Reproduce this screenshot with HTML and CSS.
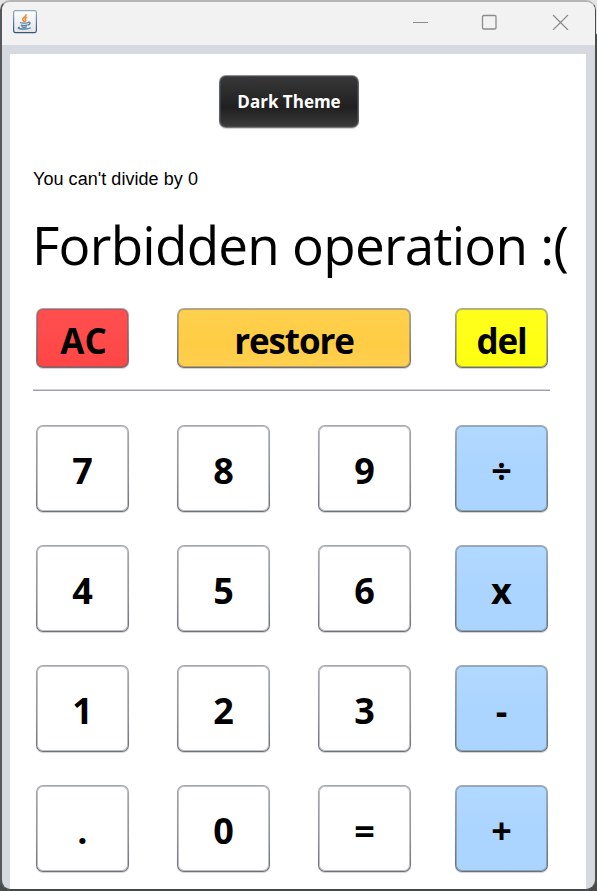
FILE: index.html
```
<!DOCTYPE html>
<html lang="en">
<head>
<meta charset="utf-8">
<title>Calculator</title>
<link rel="stylesheet" href="styles.css">
</head>
<body>
<div class="window">
  <header class="titlebar">
    <svg class="java" width="24" height="24" viewBox="0 0 24 24" fill="none">
      <defs><linearGradient id="b" x1="0" y1="0" x2="0" y2="1"><stop offset="0" stop-color="#8fa9bf"/><stop offset="1" stop-color="#305777"/></linearGradient><linearGradient id="f" x1="0" y1="0" x2="0" y2="1"><stop stop-color="#fff"/><stop offset="1" stop-color="#e2e4e6"/></linearGradient></defs>
      <rect x=".6" y=".6" width="22.8" height="22" rx="1.8" fill="url(#f)" stroke="url(#b)" stroke-width="1.2"/>
      <path d="M13.2 4.2c.3 2.500-4 3.300-3.600 5.400.2 1 1.600 1.400 1.900 2.300M14.200 7.300c-2.500 1-2.600 1.900-1.700 2.700.5.6.2 1.200-.3 1.600" stroke="#f0892f" stroke-width="1.500"/>
      <path d="M7 12.500c1.600.9 7 .8 8.500 0M7.800 14.800c1.500.7 5 .7 6.700 0M8.500 16.700c1.300.6 4 .6 5.300 0M15.300 12.200c2.400-.6 2.300 2.100-.4 3M6.800 17.200c-4.100 1 .6 1.900 4.700 1.800 3.500-.1 5.600-.7 6-1.500" stroke="#55809f" stroke-width="1.300"/>
    </svg>
    <svg class="controls" width="156" height="16" viewBox="0 0 156 16" fill="none" stroke="#8b8b8b">
      <path d="M0 8.500h15"/>
      <rect x="69.500" y="1.500" width="13.500" height="13.500" rx="1.200" stroke-width="1.300"/>
      <path d="M140 1l15 15M155 1l-15 15" stroke-width="1.200"/>
    </svg>
  </header>
  <main class="panel">
    <button class="btn theme">Dark Theme</button>
    <p class="message">You can't divide by 0</p>
    <p class="display">Forbidden operation :(</p>
    <section class="keys actions">
      <button class="btn red">AC</button>
      <button class="btn amber wide">restore</button>
      <button class="btn yellow">del</button>
    </section>
    <hr>
    <section class="keys digits">
      <button class="btn">7</button><button class="btn">8</button><button class="btn">9</button><button class="btn blue">÷</button>
      <button class="btn">4</button><button class="btn">5</button><button class="btn">6</button><button class="btn blue">x</button>
      <button class="btn">1</button><button class="btn">2</button><button class="btn">3</button><button class="btn blue">-</button>
      <button class="btn">.</button><button class="btn">0</button><button class="btn">=</button><button class="btn blue">+</button>
    </section>
  </main>
</div>
</body>
</html>
```
FILE: styles.css
```
* { box-sizing: border-box; }
body {
  margin: 0;
  width: 597px;
  height: 891px;
  overflow: hidden;
  padding: 0 1px 1px 0;
  background: linear-gradient(#e4e4e4 0 34px, #484a4c 34px);
}
.window {
  height: 890px;
  border: 2px solid #b5b5b5;
  border-width: 2px 1px 1px 2px;
  border-color: #b5b5b5 #4b4e50 #444 #55575a;
  border-radius: 10px;
  overflow: hidden;
  background: #d6d9e0;
  font-family: "Open Sans", "Noto Sans", sans-serif;
  color: #000;
}
.titlebar {
  height: 43px;
  background: #f2f2f2;
  display: flex;
  justify-content: space-between;
  align-items: flex-start;
  padding: 8px 26px 0 11px;
}
.controls { margin-top: 4px; }
.panel {
  margin: 9px 9px 0 8px;
  height: 835px;
  background: #fff;
  display: flex;
  flex-direction: column;
  align-items: flex-start;
  padding: 21px 0 0 23px;
}
.btn {
  border: 1px solid transparent;
  border-radius: 7px;
  padding: 5px 0 0;
  background: linear-gradient(#fff, #fff) padding-box, linear-gradient(#a6aaae, #8e9196 60%, #6c6f75) border-box;
  box-shadow: inset 0 0 0 1px rgba(90, 95, 102, .4), 0 1px 1px #d0d1d4;
  font: 700 36px/1 "Open Sans", "Noto Sans", sans-serif;
  color: #000;
}
.theme {
  width: 140px;
  height: 53px;
  margin-left: 186px;
  padding: 0;
  background: linear-gradient(#383838, #202020 62%, #3b3b3b) padding-box, linear-gradient(#8b9092, #606466 20%, #5c5f61 85%, #777) border-box;
  color: #fff;
  font-size: 17px;
}
.message {
  margin: 41px 0 0;
  font: 18px/20px "Liberation Sans", Arial, sans-serif;
  letter-spacing: 0.05px;
}
.display {
  margin: 16px 0 0 -1px;
  font-size: 53px;
  line-height: 80px;
  height: 80px;
  white-space: nowrap;
  letter-spacing: -0.75px;
}
.keys {
  display: grid;
  grid-template-columns: 93px 93px 93px 93px;
  column-gap: 48px;
  margin-left: 3px;
}
.keys .btn:last-child, .keys .blue { margin-left: -4px; margin-right: 4px; }
.actions { margin-top: 23px; grid-auto-rows: 60px; }
.actions .btn { font-size: 35px; letter-spacing: -1.1px; padding-top: 4px; }
.actions .red { letter-spacing: 0; padding-left: 2px; }
.wide { grid-column: span 2; }
.red { background: linear-gradient(#ff4f4f, #ff4646) padding-box, linear-gradient(#a6aaae, #6c6f75) border-box; }
.amber { background: linear-gradient(#ffd14f, #ffcc44 60%, #ffd050) padding-box, linear-gradient(#a6aaae, #6c6f75) border-box; }
.yellow { background: linear-gradient(#ffff1c, #ffff10) padding-box, linear-gradient(#a6aaae, #6c6f75) border-box; }
.blue { background: linear-gradient(#b2d9ff, #abd4ff 50%, #abd4ff) padding-box, linear-gradient(#a6aaae, #6c6f75) border-box; }
hr {
  width: 517px;
  height: 2px;
  margin: 21px 0 0;
  border: 0;
  background: linear-gradient(#cfd2d9 50%, #9ea2ad 50%);
}
.digits { margin-top: 34px; grid-auto-rows: 87px; row-gap: 33px; }
```
